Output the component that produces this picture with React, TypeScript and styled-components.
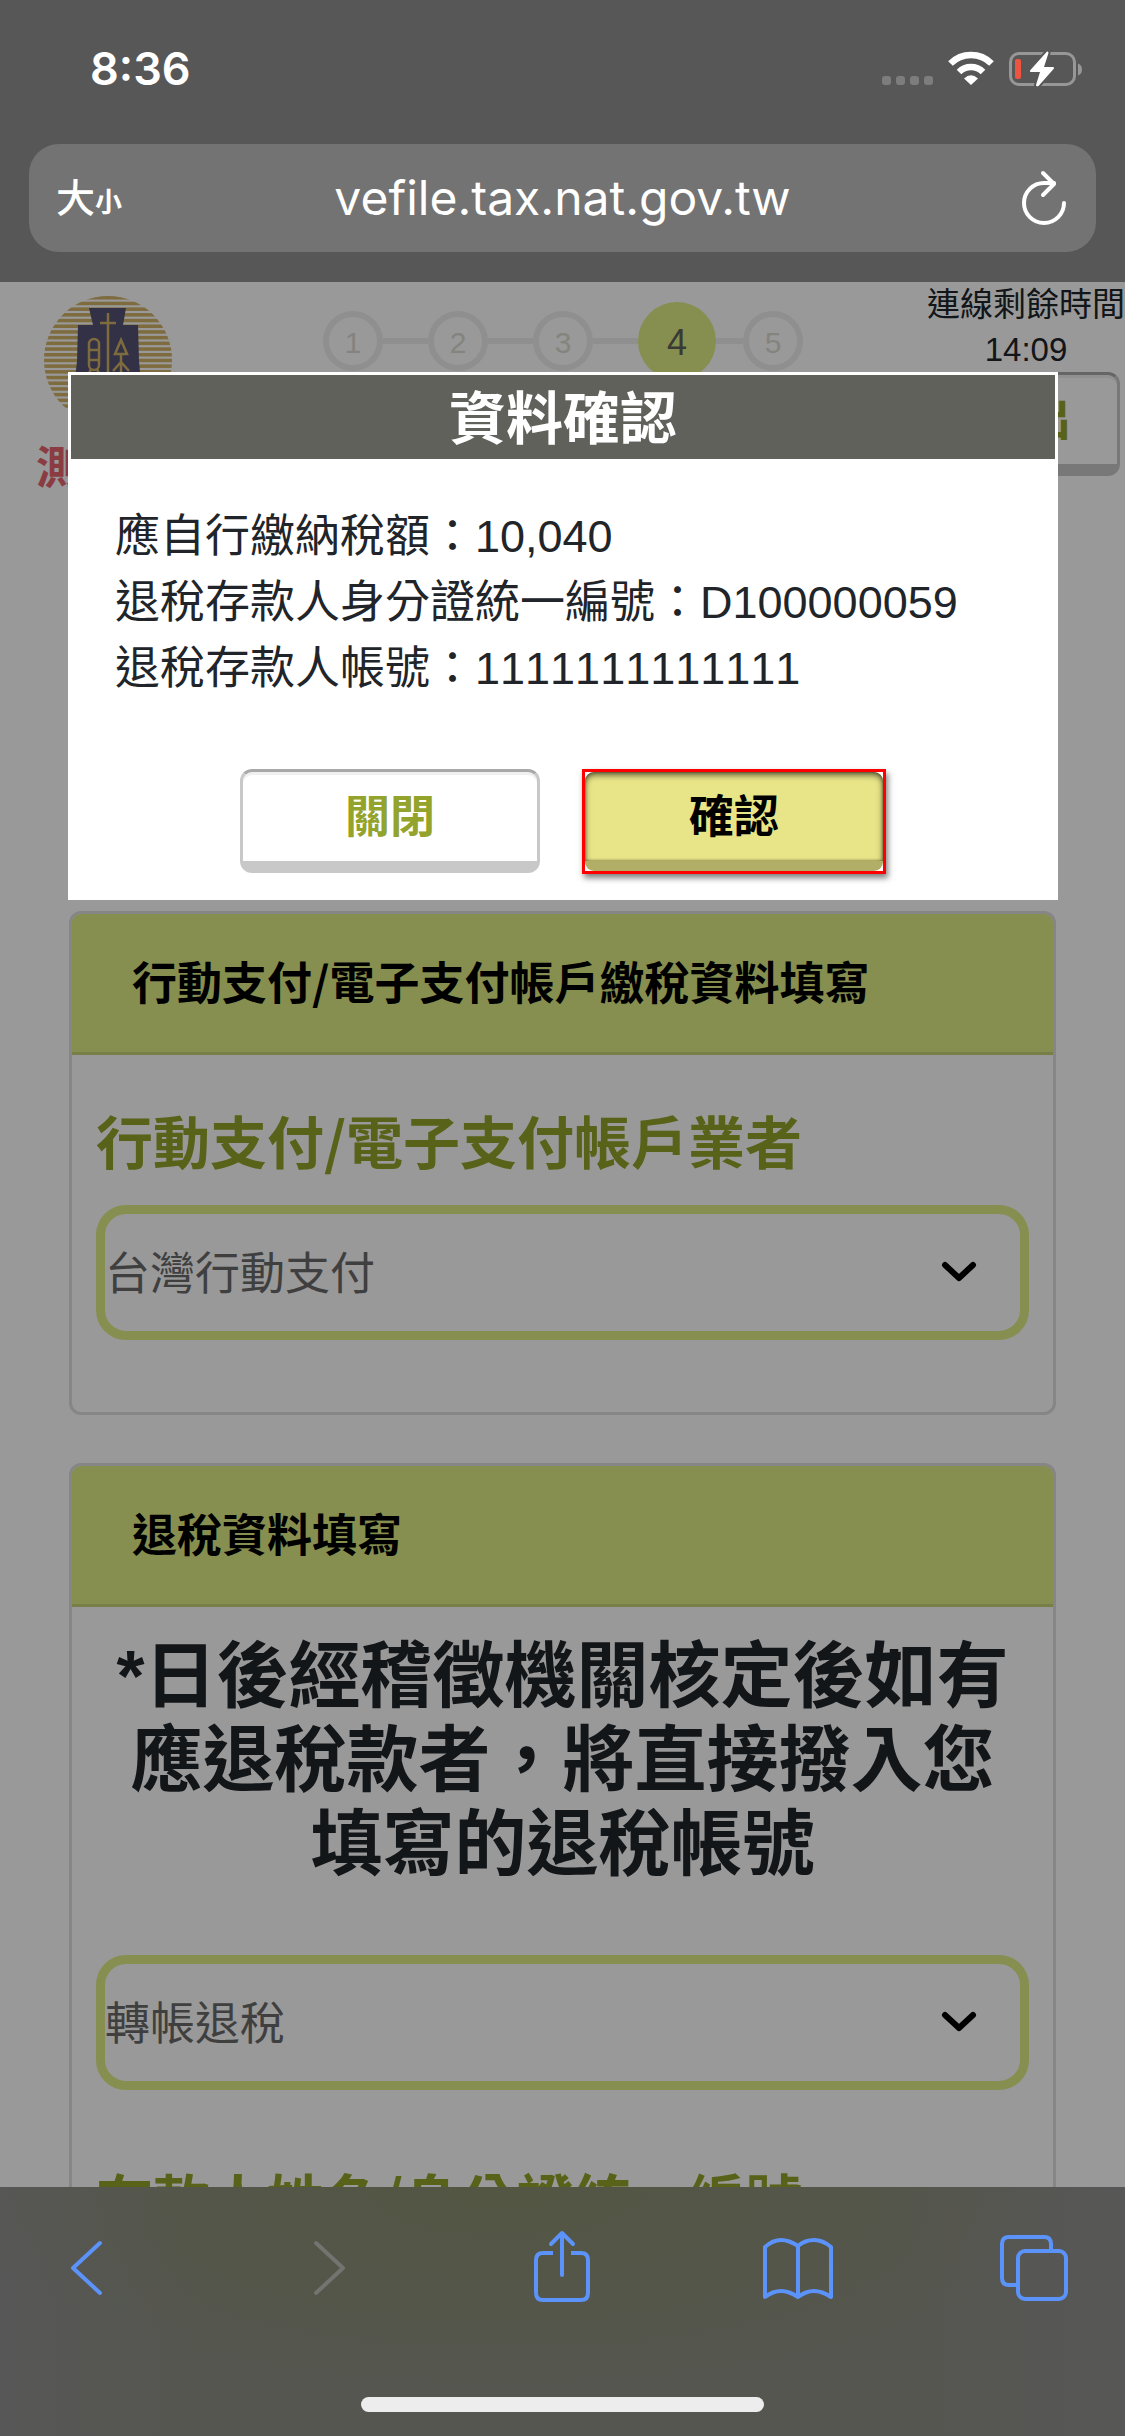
import React from "react";
import styled, { createGlobalStyle } from "styled-components";

const GlobalStyle = createGlobalStyle`
  *, *::before, *::after { box-sizing: border-box; }
  html, body { margin: 0; padding: 0; }
  body {
    background: #575757;
    color: #212529;
    font-family: "Liberation Sans", "Noto Sans CJK TC", sans-serif;
    font-size: 45px;
    font-kerning: none;
  }
  h1, h2, p { margin: 0; }
  button, select, input { font: inherit; margin: 0; }
  svg { display: block; }
`;

const Screen = styled.div`
  display: flex;
  flex-direction: column;
  height: 100vh;
  overflow: hidden;
`;

/* Browser chrome, top */

const TopChrome = styled.header`
  flex: none;
  background: #575757;
  color: #fff;
  padding-bottom: 30px;
`;

const StatusBar = styled.div`
  display: flex;
  align-items: center;
  justify-content: space-between;
  height: 138px;
  padding: 0 43px 0 90px;
`;

const Clock = styled.time`
  font-family: Inter, sans-serif;
  font-size: 45px;
  font-weight: 600;
  line-height: 54px;
`;

const AddressBar = styled.div`
  display: grid;
  grid-template-columns: 1fr auto 1fr;
  align-items: center;
  height: 108px;
  margin: 6px 29px 0;
  padding: 0 27px;
  border-radius: 30px;
  background: #737373;
`;

const BareButton = styled.button`
  display: block;
  padding: 0;
  border: 0;
  background: none;
  color: inherit;
  cursor: pointer;
`;

const TextSizeButton = styled(BareButton)`
  justify-self: start;
  font-family: "Noto Sans CJK TC", sans-serif;
  font-size: 39px;
  font-weight: 500;
  line-height: 54px;
`;

const SmallGlyph = styled.span`
  font-size: 27px;
  font-weight: 700;
`;

const Address = styled.span`
  font-family: Inter, sans-serif;
  font-size: 48px;
  line-height: 60px;
  font-kerning: normal;
`;

const ReloadButton = styled(BareButton)`
  justify-self: end;
`;

/* Page */

const Viewport = styled.div`
  position: relative;
  flex: 1;
  min-height: 0;
  overflow: hidden;
  background: #fff;
`;

const PageHeader = styled.div`
  display: flex;
  align-items: flex-start;
  height: 212px;
`;

const Brand = styled.div`
  width: 323px;
  padding: 14px 0 0 36px;
`;

const LogoBox = styled.div`
  padding-left: 8px;
`;

const TestMark = styled.p`
  margin-top: 18px;
  color: #e6646e;
  font-weight: 700;
  line-height: 54px;
`;

const Steps = styled.ol`
  display: flex;
  align-items: center;
  height: 78px;
  margin: 20px 0 0;
  padding: 0;
  list-style: none;
`;

const Step = styled.li<{ $active?: boolean }>`
  display: flex;
  align-items: center;
  justify-content: center;
  width: ${(p) => (p.$active ? 78 : 60)}px;
  height: ${(p) => (p.$active ? 78 : 60)}px;
  padding-top: 3px;
  border: ${(p) => (p.$active ? "0" : "6px solid #efefef")};
  border-radius: 50%;
  background: ${(p) => (p.$active ? "#dfee84" : "transparent")};
  color: ${(p) => (p.$active ? "#5f605a" : "#dddcd4")};
  font-size: ${(p) => (p.$active ? 36 : 30)}px;
`;

const StepLine = styled.li<{ $short?: boolean }>`
  width: ${(p) => (p.$short ? 27 : 45)}px;
  height: 6px;
  background: #efefef;
`;

const Session = styled.div`
  display: flex;
  flex-direction: column;
  align-items: center;
  width: 198px;
  margin-left: auto;
  font-size: 33px;
  line-height: 45px;
  white-space: nowrap;
`;

const PlainButton = styled.button<{ $width: number }>`
  width: ${(p) => p.$width}px;
  height: 104px;
  padding: 2px 0 0;
  border: 3px solid #c8c8c8;
  border-top-color: #a8a8a8;
  border-bottom-width: 12px;
  border-radius: 12px;
  background: #fff;
  box-shadow: inset 0 3px 0 #f0f0f0;
  color: #93a32b;
  font-size: 45px;
  font-weight: 700;
  line-height: 60px;
  cursor: pointer;
`;

const Main = styled.main`
  display: flex;
  flex-direction: column;
  gap: 48px;
  padding: 417px 69px 0;
`;

const Card = styled.section`
  border: 3px solid #dfdfdf;
  border-radius: 12px;
`;

const CardTitle = styled.h2`
  padding: 37px 60px 41px;
  border-bottom: 3px solid #c8d375;
  border-radius: 9px 9px 0 0;
  background: #dfee84;
  color: #000;
  font-family: "Noto Sans CJK TC", sans-serif;
  font-size: 45px;
  font-weight: 700;
  line-height: 60px;
`;

const CardBody = styled.div`
  padding: 0 24px 72px;
`;

const FieldLabel = styled.label<{ $gap: number }>`
  display: block;
  margin: ${(p) => p.$gap}px 0 32px;
  color: #93a328;
  font-family: "Noto Sans CJK TC", sans-serif;
  font-size: 57px;
  font-weight: 700;
  line-height: 68px;
`;

const Notice = styled.p`
  margin: 27px 0 69px;
  font-size: 72px;
  font-weight: 700;
  line-height: 84px;
  text-align: center;
`;

const SelectBox = styled.div`
  position: relative;
`;

const Select = styled.select`
  appearance: none;
  display: block;
  width: 100%;
  height: 135px;
  padding: 3px 110px 0 0;
  border: 9px solid #dfee84;
  border-radius: 30px;
  background: #fff;
  color: #6a6a6a;
`;

const TextInput = styled.input`
  display: block;
  width: 100%;
  height: 135px;
  border: 9px solid #dfee84;
  border-radius: 30px;
`;

const Chevron = styled.svg`
  position: absolute;
  top: 50%;
  right: 50px;
  margin-top: -13px;
  pointer-events: none;
`;

/* Dialog over the page */

const Backdrop = styled.div`
  position: absolute;
  inset: 0;
  padding: 90px 67px 0 68px;
  background: rgba(0, 0, 0, 0.4);
`;

const Dialog = styled.div`
  padding: 3px 3px 26px;
  background: #fff;
`;

const DialogTitle = styled.h1`
  padding-top: 4px;
  background: #60615b;
  color: #fff;
  font-size: 57px;
  font-weight: 700;
  line-height: 80px;
  text-align: center;
`;

const DialogText = styled.div`
  padding: 45px 44px 67px;
  line-height: 66px;
`;

const DialogActions = styled.div`
  display: flex;
  justify-content: center;
  gap: 42px;
`;

const HighlightFrame = styled.div`
  border: 3px solid #f00;
  box-shadow: 2px 4px 6px rgba(0, 0, 0, 0.5);
`;

const ConfirmButton = styled.button`
  display: block;
  width: 298px;
  height: 99px;
  padding: 2px 0 0;
  border: 0;
  border-bottom: 10px solid #b1ae67;
  border-radius: 9px;
  background: #e8e588;
  box-shadow: inset 0 3px 6px rgba(0, 0, 0, 0.6), inset 0 0 3px rgba(0, 0, 0, 0.5);
  color: #000;
  font-size: 45px;
  font-weight: 700;
  line-height: 60px;
  cursor: pointer;
`;

/* Browser chrome, bottom */

const BottomChrome = styled.footer`
  flex: none;
  padding: 41px 0 24px;
  background:
    radial-gradient(ellipse 50% 80% at 45% 0, rgba(82, 86, 62, 0.75), rgba(84, 86, 76, 0)),
    linear-gradient(90deg, #575757, #55564f 18%, #55564f 80%, #575757);
`;

const Toolbar = styled.nav`
  display: flex;
  justify-content: space-between;
  padding: 0 55px 0 51px;
  color: #5b93fa;
`;

const HomeIndicator = styled.div`
  width: 403px;
  height: 15px;
  margin: 89px auto 0;
  border-radius: 8px;
  background: #ededed;
`;

const StatusIcons = () => (
  <svg width="200" height="36" viewBox="0 0 200 36" aria-hidden="true">
    {[0, 14, 28, 42].map((x) => (
      <rect key={x} x={x} y="25" width="9" height="9" rx="3" fill="#7d7d7d" />
    ))}
    <g fill="none" stroke="#fff" strokeWidth="6.5">
      <path d="M68.500 12.500A29 29 0 0 1 109.500 12.500" />
      <path d="M77 21A17 17 0 0 1 101 21" />
    </g>
    <path d="M89 34L82 27.500Q89 21 96 27.500Z" fill="#fff" />
    <rect x="128.500" y="2.500" width="64" height="31" rx="8.500" fill="none" stroke="#979797" strokeWidth="3" />
    <path d="M196 12.500Q200 14 200 18.500T196 24.500Z" fill="#979797" />
    <rect x="133" y="8" width="6" height="20" rx="2" fill="#ee5440" />
    <path
      d="M165 .5L148 19.500Q147.500 21 149 21H158L154 34Q154 36 156.500 35L172 17.500Q172.500 16 171 16H162L166.500 2Q166.500 0 165 .5Z"
      fill="#fff"
      stroke="#575757"
      strokeWidth="4"
      paintOrder="stroke"
    />
  </svg>
);

const ReloadIcon = () => (
  <svg width="48" height="56" viewBox="0 0 48 56" fill="none" stroke="#fff" strokeWidth="4" strokeLinecap="round" strokeLinejoin="round" aria-hidden="true">
    <path d="M43 33A20 20 0 1 1 23 13H33" />
    <path d="M22 3L33 14L22 25" />
  </svg>
);

const stripes = Array.from({ length: 23 }, (_, i) => i);

const Logo = () => (
  <svg width="128" height="128" viewBox="0 0 128 128" role="img" aria-label="財政部">
    <defs>
      <clipPath id="disc">
        <circle cx="64" cy="64" r="64" />
      </clipPath>
    </defs>
    <g clipPath="url(#disc)" fill="#d2b268">
      {stripes.map((i) => (
        <rect key={i} x="0" y={i * 5.7} width="128" height="3.5" />
      ))}
    </g>
    <path d="M45 12H82L79 29H94L95 65L99 110H28L33 65L34 29H49Z" fill="#555274" />
    <g fill="none" stroke="#d2b268" strokeWidth="2.500">
      <path d="M64 17V108M56 27H72" />
      <rect x="45" y="43" width="10" height="31" rx="5" />
      <path d="M45 54H55M45 64H55M47 73L43 82M53 73L57 82" />
      <path d="M77 44L71 58H83ZM77 58V92M77 66L69 75M77 66L85 75" />
    </g>
  </svg>
);

const ChevronIcon = () => (
  <Chevron width="40" height="26" viewBox="0 0 40 26" fill="none" stroke="#000" strokeWidth="6" strokeLinecap="round" strokeLinejoin="round" aria-hidden="true">
    <path d="M6 5L20 18L34 5" />
  </Chevron>
);

const ToolIcon = ({ children, color = "currentColor" }: { children: React.ReactNode; color?: string }) => (
  <svg width="72" height="80" viewBox="0 0 72 80" fill="none" stroke={color} strokeWidth="4" strokeLinecap="round" strokeLinejoin="round" aria-hidden="true">
    {children}
  </svg>
);

const summary = ["應自行繳納稅額：10,040", "退稅存款人身分證統一編號：D100000059", "退稅存款人帳號：1111111111111"];

export default function App() {
  return (
    <Screen lang="zh-Hant">
      <GlobalStyle />
      <TopChrome>
        <StatusBar>
          <Clock>8:36</Clock>
          <StatusIcons />
        </StatusBar>
        <AddressBar>
          <TextSizeButton type="button">
            大<SmallGlyph>小</SmallGlyph>
          </TextSizeButton>
          <Address>vefile.tax.nat.gov.tw</Address>
          <ReloadButton type="button" aria-label="重新載入">
            <ReloadIcon />
          </ReloadButton>
        </AddressBar>
      </TopChrome>

      <Viewport>
        <PageHeader>
          <Brand>
            <LogoBox>
              <Logo />
            </LogoBox>
            <TestMark>測試</TestMark>
          </Brand>
          <Steps>
            <Step>1</Step>
            <StepLine aria-hidden="true" />
            <Step>2</Step>
            <StepLine aria-hidden="true" />
            <Step>3</Step>
            <StepLine aria-hidden="true" />
            <Step $active aria-current="step">
              4
            </Step>
            <StepLine $short aria-hidden="true" />
            <Step>5</Step>
          </Steps>
          <Session>
            <span>連線剩餘時間</span>
            <span>14:09</span>
            <PlainButton type="button" $width={188}>
              登出
            </PlainButton>
          </Session>
        </PageHeader>

        <Main>
          <Card>
            <CardTitle>行動支付/電子支付帳戶繳稅資料填寫</CardTitle>
            <CardBody>
              <FieldLabel htmlFor="provider" $gap={50}>
                行動支付/電子支付帳戶業者
              </FieldLabel>
              <SelectBox>
                <Select id="provider" defaultValue="twmp">
                  <option value="twmp">台灣行動支付</option>
                </Select>
                <ChevronIcon />
              </SelectBox>
            </CardBody>
          </Card>
          <Card>
            <CardTitle>退稅資料填寫</CardTitle>
            <CardBody>
              <Notice>*日後經稽徵機關核定後如有應退稅款者，將直接撥入您填寫的退稅帳號</Notice>
              <SelectBox>
                <Select aria-label="退稅方式" defaultValue="transfer">
                  <option value="transfer">轉帳退稅</option>
                </Select>
                <ChevronIcon />
              </SelectBox>
              <FieldLabel htmlFor="holder" $gap={73}>
                存款人姓名/身分證統一編號
              </FieldLabel>
              <TextInput id="holder" type="text" />
            </CardBody>
          </Card>
        </Main>

        <Backdrop>
          <Dialog role="dialog" aria-modal="true" aria-labelledby="dialog-title">
            <DialogTitle id="dialog-title">資料確認</DialogTitle>
            <DialogText>
              {summary.map((line) => (
                <p key={line}>{line}</p>
              ))}
            </DialogText>
            <DialogActions>
              <PlainButton type="button" $width={300}>
                關閉
              </PlainButton>
              <HighlightFrame>
                <ConfirmButton type="button">確認</ConfirmButton>
              </HighlightFrame>
            </DialogActions>
          </Dialog>
        </Backdrop>
      </Viewport>

      <BottomChrome>
        <Toolbar>
          <BareButton type="button" aria-label="上一頁">
            <ToolIcon>
              <path d="M49 15L22 40L49 65" />
            </ToolIcon>
          </BareButton>
          <BareButton type="button" aria-label="下一頁">
            <ToolIcon color="#73736f">
              <path d="M28 15L55 40L28 65" />
            </ToolIcon>
          </BareButton>
          <BareButton type="button" aria-label="分享">
            <ToolIcon>
              <path d="M28 25H18Q11 25 11 32V65Q11 72 18 72H56Q63 72 63 65V32Q63 25 56 25H46" strokeLinecap="butt" />
              <path d="M37 5V47M26 16L37 5L48 16" />
            </ToolIcon>
          </BareButton>
          <BareButton type="button" aria-label="書籤">
            <ToolIcon>
              <path d="M37 18Q28 12 20 12T4 19V69Q12 63 20 63T37 69Q45 63 53 63T70 69V19Q62 12 53 12T37 18V69" />
            </ToolIcon>
          </BareButton>
          <BareButton type="button" aria-label="分頁">
            <ToolIcon>
              <path d="M18 57H11Q4 57 4 50V16Q4 9 11 9H46Q53 9 53 16V23" strokeLinecap="butt" />
              <rect x="20" y="23" width="48" height="48" rx="7" />
            </ToolIcon>
          </BareButton>
        </Toolbar>
        <HomeIndicator />
      </BottomChrome>
    </Screen>
  );
}
